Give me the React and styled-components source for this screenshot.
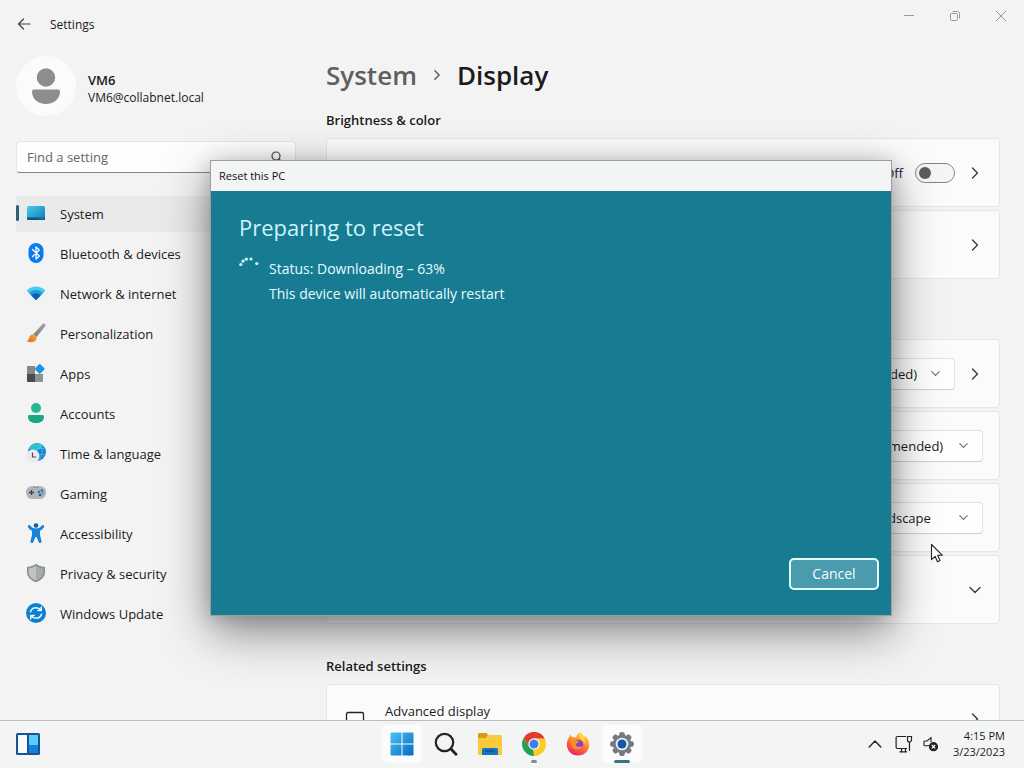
import React from 'react';
import styled, { createGlobalStyle } from 'styled-components';

const Global = createGlobalStyle`
  *, *::before, *::after { box-sizing: border-box; }
  html, body { margin: 0; height: 100%; overflow: hidden; }
  body {
    background: #f3f3f3;
    color: #1b1b1b;
    font-family: 'Open Sans', 'Noto Sans', sans-serif;
    font-size: 13px;
    line-height: 20px;
  }
  #root { height: 100%; }
  button, input, select { font: inherit; color: inherit; margin: 0; }
  h1, h2, p { margin: 0; }
  svg { display: block; flex: none; }
`;

const Desktop = styled.div`
  position: relative;
  display: flex;
  flex-direction: column;
  height: 100vh;
  overflow: hidden;
`;

const SettingsWindow = styled.div`
  flex: 1;
  min-height: 0;
  display: flex;
  flex-direction: column;
  overflow: hidden;
`;

const TitleBar = styled.header`
  flex: none;
  display: flex;
  align-items: flex-start;
  height: 48px;
`;

const AppTitle = styled.span`
  flex: 1;
  font-size: 12px;
  line-height: 50px;
  padding-left: 2px;
`;

const PlainButton = styled.button`
  display: flex;
  align-items: center;
  justify-content: center;
  padding: 0;
  border: 0;
  background: transparent;
  width: ${(p) => p.$w || 20}px;
  height: ${(p) => p.$h || 20}px;
`;

const Body = styled.div`
  flex: 1;
  min-height: 0;
  display: flex;
`;

const Sidebar = styled.aside`
  flex: none;
  width: 326px;
  padding: 8px 30px 0 16px;
`;

const Profile = styled.div`
  display: flex;
  align-items: center;
  gap: 12px;
  height: 60px;
  margin-bottom: 25px;
`;

const Avatar = styled.div`
  display: flex;
  align-items: center;
  justify-content: center;
  width: 60px;
  height: 60px;
  border-radius: 50%;
  background: #fbfbfb;
`;

const UserName = styled.p`
  font-weight: 600;
  line-height: 18px;
  padding-top: 6px;
`;

const UserMail = styled.p`
  font-size: 12px;
  line-height: 18px;
`;

const SearchBox = styled.label`
  display: flex;
  align-items: center;
  height: 32px;
  margin-bottom: 23px;
  padding: 0 12px 0 10px;
  border: 1px solid #e5e5e5;
  border-bottom-color: #868686;
  border-radius: 4px;
  background: #fdfdfd;
`;

const SearchInput = styled.input`
  flex: 1;
  min-width: 0;
  padding: 0;
  border: 0;
  outline: 0;
  background: transparent;
  &::placeholder { color: #666; opacity: 1; }
`;

const Nav = styled.nav`
  display: flex;
  flex-direction: column;
  gap: 4px;
`;

const NavLink = styled.a`
  position: relative;
  display: flex;
  align-items: center;
  gap: 14px;
  height: 36px;
  padding-left: 10px;
  border-radius: 4px;
  color: #1b1b1b;
  text-decoration: none;
  background: ${(p) => (p.$active ? '#eaeaea' : 'transparent')};
  & > svg { margin-bottom: 2px; }
  &::before {
    content: '';
    position: absolute;
    left: 0;
    top: 9px;
    width: 3px;
    height: 16px;
    border-radius: 2px;
    background: ${(p) => (p.$active ? '#2b6073' : 'transparent')};
  }
`;

const Main = styled.main`
  flex: 1;
  min-width: 0;
  padding: 7px 24px 0 0;
`;

const Crumbs = styled.h1`
  display: flex;
  align-items: center;
  gap: 15px;
  font-size: 26px;
  font-weight: 600;
  line-height: 40px;
`;

const CrumbLink = styled.a`
  color: #5f5f5f;
  text-decoration: none;
`;

const SectionTitle = styled.h2`
  font-size: 13px;
  font-weight: 600;
  line-height: 20px;
  margin-bottom: 8px;
`;

const Section = styled.section`
  padding-top: ${(p) => (p.$first ? 15 : 32)}px;
`;

const Cards = styled.div`
  display: flex;
  flex-direction: column;
  gap: 3px;
`;

const Card = styled.div`
  display: flex;
  align-items: center;
  justify-content: flex-end;
  gap: 12px;
  height: 69px;
  padding: 0 16px;
  border: 1px solid #e6e6e6;
  border-radius: 4px;
  background: #fbfbfb;
`;

const CardLead = styled.div`
  flex: 1;
  display: flex;
  align-items: center;
  gap: 20px;
  padding-left: 2px;
`;

const CardHeading = styled.p`
  min-height: 36px;
`;

const SwitchLabel = styled.label`
  display: flex;
  align-items: center;
  gap: 12px;
`;

const Switch = styled.input`
  appearance: none;
  display: flex;
  align-items: center;
  width: 40px;
  height: 20px;
  padding-left: 3px;
  border: 1px solid #868686;
  border-radius: 10px;
  background: #f5f5f5;
  &::before {
    content: '';
    width: 12px;
    height: 12px;
    border-radius: 50%;
    background: #5c5c5c;
  }
`;

const SelectWrap = styled.div`
  display: grid;
  align-items: center;
  justify-items: end;
  & > * { grid-area: 1 / 1; }
  & > svg { margin-right: 15px; pointer-events: none; }
`;

const Select = styled.select`
  appearance: none;
  width: ${(p) => p.$w}px;
  height: 32px;
  padding: 0 36px 0 12px;
  border: 1px solid #e3e3e3;
  border-bottom-color: #cfcfcf;
  border-radius: 4px;
  background: #fefefe;
`;

const Dialog = styled.section`
  position: absolute;
  left: 210px;
  top: 160px;
  width: 682px;
  height: 456px;
  display: flex;
  flex-direction: column;
  border: 1px solid #9c9fa0;
  background: #177c92;
  box-shadow: 0 16px 44px rgba(0, 0, 0, 0.45), 0 2px 18px rgba(0, 0, 0, 0.16);
`;

const DialogBar = styled.header`
  flex: none;
  height: 30px;
  padding-left: 8px;
  background: #f3f4f4;
  color: #111;
  font-size: 11px;
  line-height: 29px;
`;

const DialogBody = styled.div`
  flex: 1;
  display: flex;
  flex-direction: column;
  padding: 19px 12px 25px 28px;
  color: #e6fbff;
`;

const DialogTitle = styled.h2`
  font-size: 22px;
  font-weight: 400;
  line-height: 34px;
  color: #cff3fb;
`;

const Status = styled.div`
  flex: 1;
  display: flex;
  align-items: flex-start;
  gap: 10px;
  padding-top: 12px;
  font-size: 14px;
  line-height: 25px;
`;

const Actions = styled.div`
  display: flex;
  justify-content: flex-end;
`;

const CancelButton = styled.button`
  width: 90px;
  height: 32px;
  padding: 0;
  border: 2px solid #e2ffff;
  border-radius: 5px;
  background: #4a9bad;
  color: #f2ffff;
  font-size: 14px;
`;

const Taskbar = styled.footer`
  flex: none;
  display: grid;
  grid-template-columns: 1fr auto 1fr;
  align-items: center;
  height: 48px;
  padding: 0 16px 2px;
  border-top: 1px solid #bdbdbd;
  background: #f3f4f4;
`;

const Apps = styled.div`
  display: flex;
  gap: 4px;
`;

const AppButton = styled.button`
  position: relative;
  display: flex;
  align-items: center;
  justify-content: center;
  width: 40px;
  height: 38px;
  padding: 0;
  border: 0;
  border-radius: 4px;
  background: ${(p) => (p.$lit ? '#fcfcfc' : 'transparent')};
  &::after {
    content: '';
    position: absolute;
    bottom: 0;
    left: calc(50% - ${(p) => (p.$mark || 0) / 2}px);
    width: ${(p) => p.$mark || 0}px;
    height: 3px;
    border-radius: 2px;
    background: ${(p) => (p.$lit ? '#2b7a86' : '#8a8a8a')};
  }
`;

const Tray = styled.div`
  display: flex;
  align-items: center;
  justify-content: flex-end;
  gap: 10px;
`;

const Clock = styled.time`
  padding: 0 3px 0 4px;
  font-size: 11px;
  line-height: 16px;
  text-align: right;
`;

const Pointer = styled.svg`
  position: absolute;
  left: 930px;
  top: 543px;
`;

const Chevron = ({ d = 'right', size = 12, color = '#3a3a3a', w = 1.4 }) => {
  const paths = { right: 'M3.5 1 8.5 6 3.5 11', down: 'M1 3.5 6 8.5 11 3.5', up: 'M1 8.5 6 3.5 11 8.5' };
  return (
    <svg width={size} height={size} viewBox="0 0 12 12" fill="none" stroke={color} strokeWidth={w} strokeLinecap="round" strokeLinejoin="round">
      <path d={paths[d]} />
    </svg>
  );
};

const Icon = ({ children }) => (
  <svg width="20" height="20" viewBox="0 0 20 20" fill="none">{children}</svg>
);

const SystemIcon = () => (
  <Icon>
    <defs><linearGradient id="sys" x1="0" y1="0" x2="1" y2="1"><stop stopColor="#43d0ee" /><stop offset="1" stopColor="#1279b4" /></linearGradient></defs>
    <rect x="1" y="3" width="18" height="14" rx="1.5" fill="url(#sys)" />
    <path d="M1 14.500h18v1a1.500 1.500 0 0 1-1.500 1.500h-15A1.500 1.500 0 0 1 1 15.500z" fill="#0d5680" />
    <path d="M13.500 15.700h1M16 15.700h1" stroke="#5fd0f0" strokeWidth=".8" />
  </Icon>
);

const BluetoothIcon = () => (
  <Icon>
    <rect x="2.500" y="0" width="15" height="20" rx="7.500" fill="#0a7af0" />
    <path d="M6.500 6.500 13.300 13 10 16V4l3.300 3-6.800 6.500" stroke="#fff" strokeWidth="1.300" strokeLinejoin="round" strokeLinecap="round" />
  </Icon>
);

const NetworkIcon = () => (
  <Icon>
    <path d="M.5 7.500C6 2 14 2 19.500 7.500L10.700 16.600a1 1 0 0 1-1.400 0z" fill="#4ccbf1" />
    <path d="M2.800 9.800c4.200-3.900 10.200-3.900 14.400 0l-6.500 6.800a1 1 0 0 1-1.400 0z" fill="#1f9be0" />
    <path d="M5.300 12.400c2.700-2.500 6.700-2.500 9.400 0l-4 4.200a1 1 0 0 1-1.400 0z" fill="#0b63ad" />
  </Icon>
);

const BrushIcon = () => (
  <Icon>
    <defs>
      <linearGradient id="hand" x1="0" y1="1" x2="1" y2="0"><stop stopColor="#7b7b80" /><stop offset="1" stopColor="#a4a4a9" /></linearGradient>
      <linearGradient id="hair" x1="1" y1="0" x2="0" y2="1"><stop stopColor="#f9b24d" /><stop offset="1" stopColor="#e0641a" /></linearGradient>
    </defs>
    <path d="M18.800.8c1 .7.700 1.900 0 3L10.600 14 7.300 11.300 16.200 1.500C17 .6 18 .3 18.800.8z" fill="url(#hand)" />
    <path d="M7.300 11.300 10.600 14c.5 2.800-1.700 5-4.600 5.200-2.100.2-4.200-.1-5.600-1.100 1.900-.4 2.200-1.800 2.600-3.400.6-2.400 2.500-3.700 4.300-3.400z" fill="url(#hair)" />
  </Icon>
);

const AppsIcon = () => (
  <Icon>
    <path d="M1 3h8v8H1z" fill="#85888b" />
    <path d="M1 11h8v8H2a1 1 0 0 1-1-1z" fill="#494b4e" />
    <path d="M9 11h8v7a1 1 0 0 1-1 1H9z" fill="#8e9194" />
    <path d="m13.100 1.300-4 4a1 1 0 0 0 0 1.300l4 4a1 1 0 0 0 1.300 0l4-4a1 1 0 0 0 0-1.300l-4-4a1 1 0 0 0-1.300 0z" fill="#1f93e0" />
  </Icon>
);

const AccountsIcon = () => (
  <Icon>
    <circle cx="10" cy="5" r="5" fill="#25b992" />
    <path d="M3.700 12h12.600c1 0 1.700.8 1.700 1.700 0 4-3.500 6.300-8 6.300s-8-2.300-8-6.300c0-1 .7-1.700 1.700-1.700z" fill="#1fa582" />
  </Icon>
);

const TimeIcon = () => (
  <Icon>
    <circle cx="11" cy="9" r="9" fill="#1686d3" />
    <path d="M3 5C6-1 14-1 17 2.500c-1 3-4 3-5 5s-4 3-9-2.500z" fill="#30bfd3" />
    <path d="M14 1c3 5 3 11-1 16.500M10 5.500h9.500M12 11.500h7.500" stroke="#67c5ef" strokeWidth=".6" />
    <circle cx="6.800" cy="13.200" r="6.600" fill="#ece9ec" />
    <path d="M6.500 9.500V14H10" stroke="#4b4660" strokeWidth="1.200" />
  </Icon>
);

const GamingIcon = () => (
  <Icon>
    <rect x="0" y="3" width="20" height="13" rx="6" fill="#adb5bd" />
    <path d="M3 9.500h5M5.500 7v5" stroke="#3a4046" strokeWidth="1.300" />
    <path d="M8.500 4.500h.8M11.500 4.500h.8" stroke="#3a4046" strokeWidth="1" />
    <circle cx="13" cy="9" r="1.300" fill="#3070a8" /><circle cx="16" cy="7.500" r="1.300" fill="#3070a8" />
    <circle cx="14" cy="12" r="1.300" fill="#24578a" /><circle cx="16.600" cy="10.400" r="1.100" fill="#548bb6" />
  </Icon>
);

const AccessIcon = () => (
  <Icon>
    <circle cx="10" cy="2.500" r="2.300" fill="#155c9a" />
    <path d="M2.500 2.300c.7-.5 1.500-.2 2 .4C5.600 4.500 7.500 5.500 10 5.500s4.400-1 5.500-2.800c.5-.6 1.300-.9 2-.4.8.5.8 1.400.3 2.100-1 1.600-2.300 2.700-3.800 3.400V12l1.500 6c.2.900-.2 1.700-1 1.900s-1.600-.2-1.800-1L10.500 14h-1l-2.200 4.900c-.2.8-1 1.200-1.800 1s-1.200-1-1-1.900L6 12V7.800C4.500 7.100 3.200 6 2.200 4.400c-.5-.7-.5-1.600.3-2.100z" fill="#1684d8" />
  </Icon>
);

const ShieldIcon = () => (
  <Icon>
    <path d="M10 .8c2.300 1.900 5 2.700 8.500 2.900.3 0 .5.300.5.600v4.900c0 4.600-3.400 7.800-9 10C4.400 17 1 13.800 1 9.200V4.300c0-.3.200-.6.500-.6C5 3.500 7.700 2.700 10 .8z" fill="#8b8f91" />
    <path d="M10 2.800c2 1.500 4.400 2.200 7.400 2.400v4c0 3.600-2.600 6.200-7.400 8.200z" fill="#a7abac" />
    <path d="M10 2.800C8 4.300 5.600 5 2.600 5.200v4c0 3.600 2.600 6.200 7.400 8.200z" fill="#c0c3c3" />
  </Icon>
);

const UpdateIcon = () => (
  <Icon>
    <circle cx="10" cy="10" r="10" fill="#0d7fd3" />
    <path d="M4.500 8.700C5.300 6 7.500 4.700 10 4.700c2.100 0 3.800 1 5 2.600M15.300 4v3.600h-3.600M15.500 11.300c-.8 2.700-3 4-5.500 4-2.100 0-3.800-1-5-2.600M4.700 16v-3.600h3.600" stroke="#e9f8ff" strokeWidth="1.500" strokeLinecap="round" strokeLinejoin="round" />
  </Icon>
);

const NAV = [
  ['System', SystemIcon],
  ['Bluetooth & devices', BluetoothIcon],
  ['Network & internet', NetworkIcon],
  ['Personalization', BrushIcon],
  ['Apps', AppsIcon],
  ['Accounts', AccountsIcon],
  ['Time & language', TimeIcon],
  ['Gaming', GamingIcon],
  ['Accessibility', AccessIcon],
  ['Privacy & security', ShieldIcon],
  ['Windows Update', UpdateIcon],
];

const Dropdown = ({ label, value, width }) => (
  <SelectWrap>
    <Select aria-label={label} $w={width} defaultValue={value}>
      <option>{value}</option>
    </Select>
    <Chevron d="down" size={9} color="#6a6a6a" />
  </SelectWrap>
);

const WidgetsIcon = () => (
  <svg width="24" height="22" viewBox="0 0 24 22">
    <rect width="24" height="22" rx="1.500" fill="#14568f" />
    <path d="M2 2h9v18H2z" fill="#f8fcff" />
    <path d="M13 2h9v10h-9z" fill="#5ccbfb" />
    <path d="M13 12h9v8h-9z" fill="#1581dc" />
  </svg>
);

const StartIcon = () => (
  <svg width="24" height="24" viewBox="0 0 24 24">
    <defs><linearGradient id="win" x1="0" y1="0" x2="1" y2="1"><stop stopColor="#4cc3f5" /><stop offset="1" stopColor="#0669c4" /></linearGradient></defs>
    <path d="M1.500.5h10v11h-11v-10a1 1 0 0 1 1-1zM12.500.5h10a1 1 0 0 1 1 1v10h-11zM.5 12.500h11v11h-10a1 1 0 0 1-1-1zM12.500 12.500h11v10a1 1 0 0 1-1 1h-10z" fill="url(#win)" />
  </svg>
);

const FindIcon = () => (
  <svg width="24" height="24" viewBox="0 0 24 24" fill="none" stroke="#222427" strokeLinecap="round">
    <circle cx="10.500" cy="10.500" r="8.700" strokeWidth="2.200" />
    <path d="m17 17 5 5.200" strokeWidth="2.900" />
  </svg>
);

const FolderIcon = () => (
  <svg width="26" height="24" viewBox="0 0 26 24">
    <path d="M1 2.500A1.500 1.500 0 0 1 2.500 1h7l2.500 3.500-2 3H1z" fill="#d79a14" />
    <path d="M11 3h12.500A1.500 1.500 0 0 1 25 4.500v17a1.500 1.500 0 0 1-1.500 1.500h-21A1.500 1.500 0 0 1 1 21.500V6h7.500z" fill="#fac93c" />
    <path d="M5 23v-5.500A1.500 1.500 0 0 1 6.500 16h13a1.500 1.500 0 0 1 1.500 1.500V23z" fill="#1474c4" />
    <path d="M8 19h10" stroke="#0c519a" strokeWidth="1.500" />
  </svg>
);

const ChromeIcon = () => (
  <svg width="24" height="24" viewBox="0 0 24 24">
    <path d="M12 12 22.390 6A12 12 0 0 1 12 24z" fill="#fccb25" />
    <path d="M12 6.500h10.700L17 15l-5-3z" fill="#fccb25" />
    <path d="M12 6.500H22.700A12 12 0 0 0 1.610 6l5.630 8.700z" fill="#e23b30" />
    <path d="M1.610 6 7.200 14.700l4.800 2.800L12 24A12 12 0 0 1 1.610 6z" fill="#25a052" />
    <path d="M16.800 14.800 12 24l-1-6.500z" fill="#fccb25" />
    <circle cx="12" cy="12" r="5.700" fill="#fff" />
    <circle cx="12" cy="12" r="4.500" fill="#3a7ff0" />
  </svg>
);

const FirefoxIcon = () => (
  <svg width="24" height="24" viewBox="0 0 24 24">
    <defs>
      <linearGradient id="fox" x1=".8" y1="0" x2=".3" y2="1"><stop stopColor="#ffe04a" /><stop offset=".45" stopColor="#ff8a2a" /><stop offset="1" stopColor="#ec1d63" /></linearGradient>
    </defs>
    <path d="M14.500.5c2 1.300 3.200 2.800 3.800 4.800.5-.5.700-1 .6-1.800 2.800 2.500 4.300 5.300 4.300 9.200C23.200 19 18.300 23.500 12 23.500S.8 18.700.8 12.500c0-3.300 1.100-5.600 2.500-7.500.1-1 .4-1.700 1-2.500.3 1.200.9 2 1.900 2.500 1.500-.3 2.500 0 3.600.6C10.800 2.500 12.600.8 14.500.5z" fill="url(#fox)" />
    <circle cx="12.200" cy="12.800" r="5" fill="#8440cf" />
    <path d="M4.500 7.200c2.500-1 4.600-.4 6 1 1 .9 2.500.7 2.500 1.600 0 1.100-2.500 1-3 2.500-.4 1.400 1 3 3.400 2.500 1.200-.3 2.200-.8 3-.3-1 2.400-3 3.500-5.500 3.300C6.500 17.400 4 13 4.500 7.200z" fill="#ff8b27" />
    <path d="M14.500.5c2.900 2.800 4.800 6.300 4.400 11.500-.8-2.700-2-3.900-4.400-5-1.800-2.500-1.300-4.600 0-6.500z" fill="#ffd83c" />
  </svg>
);

const GearIcon = () => (
  <svg width="24" height="24" viewBox="0 0 24 24">
    <g fill="#76797d">
      {[0, 45, 90, 135, 180, 225, 270, 315].map((a) => (
        <path key={a} d="M8.800 4 9.700.6Q12-.4 14.300.6L15.200 4z" transform={`rotate(${a} 12 12)`} />
      ))}
      <circle cx="12" cy="12" r="9" />
    </g>
    <circle cx="12" cy="12" r="6.300" fill="#eef3f7" />
    <circle cx="12" cy="12" r="4.500" fill="#1159ab" />
  </svg>
);

export default function App() {
  return (
    <>
      <Global />
      <Desktop>
        <SettingsWindow>
          <TitleBar>
            <PlainButton $w={48} $h={48} aria-label="Back">
              <svg width="14" height="14" viewBox="0 0 14 14" fill="none" stroke="#444" strokeWidth="1.200" strokeLinecap="round" strokeLinejoin="round"><path d="M13 7H1.500M6.500 2l-5 5 5 5" /></svg>
            </PlainButton>
            <AppTitle>Settings</AppTitle>
            <PlainButton $w={46} $h={32} aria-label="Minimize">
              <svg width="10" height="10" viewBox="0 0 10 10" stroke="#999"><path d="M0 4.500h10" /></svg>
            </PlainButton>
            <PlainButton $w={46} $h={32} aria-label="Restore">
              <svg width="10" height="10" viewBox="0 0 10 10" fill="none" stroke="#999"><rect x=".5" y="2.500" width="7" height="7" rx="1" /><path d="M2.500.5h5a2 2 0 0 1 2 2v5" /></svg>
            </PlainButton>
            <PlainButton $w={46} $h={32} aria-label="Close">
              <svg width="12" height="12" viewBox="0 0 12 12" stroke="#999"><path d="m1 1 10 10M11 1 1 11" /></svg>
            </PlainButton>
          </TitleBar>
          <Body>
            <Sidebar>
              <Profile>
                <Avatar>
                  <svg width="28" height="36" viewBox="0 0 28 36" fill="#8d8d8d"><circle cx="14" cy="9.500" r="9.200" /><path d="M2 21.500h24a2 2 0 0 1 2 2C28 31 22 36 14 36S0 31 0 23.500a2 2 0 0 1 2-2z" /></svg>
                </Avatar>
                <div>
                  <UserName>VM6</UserName>
                  <UserMail>VM6@collabnet.local</UserMail>
                </div>
              </Profile>
              <SearchBox>
                <SearchInput type="text" placeholder="Find a setting" aria-label="Find a setting" />
                <svg width="12" height="12" viewBox="0 0 12 12" fill="none" stroke="#4a4a4a" strokeWidth="1.200" strokeLinecap="round"><circle cx="5" cy="5" r="4" /><path d="m8 8 3.300 3.300" /></svg>
              </SearchBox>
              <Nav>
                {NAV.map(([label, Glyph], i) => (
                  <NavLink key={label} href="#" $active={i === 0}>
                    <Glyph />
                    {label}
                  </NavLink>
                ))}
              </Nav>
            </Sidebar>
            <Main>
              <Crumbs>
                <CrumbLink href="#">System</CrumbLink>
                <Chevron size={10} color="#5f5f5f" w={1.8} />
                <span>Display</span>
              </Crumbs>
              <Section $first>
                <SectionTitle>Brightness &amp; color</SectionTitle>
                <Cards>
                  <Card>
                    <SwitchLabel>Off<Switch type="checkbox" role="switch" /></SwitchLabel>
                    <PlainButton $w={16} aria-label="Night light options"><Chevron /></PlainButton>
                  </Card>
                  <Card>
                    <PlainButton $w={16} aria-label="HDR options"><Chevron /></PlainButton>
                  </Card>
                </Cards>
              </Section>
              <Section>
                <SectionTitle>Scale &amp; layout</SectionTitle>
                <Cards>
                  <Card>
                    <Dropdown label="Scale" value="100% (Recommended)" width={187} />
                    <PlainButton $w={16} aria-label="Custom scaling"><Chevron /></PlainButton>
                  </Card>
                  <Card><Dropdown label="Display resolution" value="1024 × 768 (Recommended)" width={222} /></Card>
                  <Card><Dropdown label="Display orientation" value="Landscape" width={130} /></Card>
                  <Card>
                    <PlainButton $w={16} aria-label="Multiple displays"><Chevron d="down" /></PlainButton>
                  </Card>
                </Cards>
              </Section>
              <Section>
                <SectionTitle>Related settings</SectionTitle>
                <Cards>
                  <Card>
                    <CardLead>
                      <svg width="20" height="16" viewBox="0 0 20 16" fill="none" stroke="#222" strokeWidth="1.300"><rect x="1.500" y="1.500" width="17" height="11.500" rx="1.500" /><path d="M6 15.300h8" /></svg>
                      <CardHeading>Advanced display</CardHeading>
                    </CardLead>
                    <PlainButton $w={16} aria-label="Advanced display"><Chevron /></PlainButton>
                  </Card>
                </Cards>
              </Section>
            </Main>
          </Body>
        </SettingsWindow>

        <Taskbar>
          <PlainButton $w={24} $h={24} aria-label="Widgets"><WidgetsIcon /></PlainButton>
          <Apps>
            <AppButton $lit aria-label="Start"><StartIcon /></AppButton>
            <AppButton aria-label="Search"><FindIcon /></AppButton>
            <AppButton aria-label="File Explorer"><FolderIcon /></AppButton>
            <AppButton $mark={6} aria-label="Chrome"><ChromeIcon /></AppButton>
            <AppButton aria-label="Firefox"><FirefoxIcon /></AppButton>
            <AppButton $lit $mark={16} aria-label="Settings"><GearIcon /></AppButton>
          </Apps>
          <Tray>
            <PlainButton aria-label="Show hidden icons"><Chevron d="up" size={14} color="#222" w={1.2} /></PlainButton>
            <svg width="18" height="18" viewBox="0 0 18 18" fill="none" stroke="#222" strokeWidth="1.200">
              <path d="M11 1.500H2.500a1.400 1.400 0 0 0-1.400 1.400v9.200a1.400 1.400 0 0 0 1.400 1.400H12M4.500 16.900H12M6.500 13.500v3.400M10.500 13.500v3.400M14.500 7v9" />
              <path d="M12.500 1.500h4V5a2 2 0 0 1-4 0z" />
            </svg>
            <svg width="16" height="16" viewBox="0 0 16 16">
              <path d="M6.500 9.500 4 9.800H1.800A.8.800 0 0 1 1 9V5.800A.8.800 0 0 1 1.800 5H4l4-3.300V6" fill="none" stroke="#222" strokeWidth="1.100" />
              <circle cx="10.500" cy="10.700" r="4.600" fill="#222" />
              <path d="m8.800 9 3.400 3.400M12.200 9l-3.400 3.400" stroke="#fff" strokeWidth="1.200" />
            </svg>
            <Clock>4:15 PM<br />3/23/2023</Clock>
          </Tray>
        </Taskbar>

        <Dialog role="dialog" aria-label="Reset this PC">
          <DialogBar>Reset this PC</DialogBar>
          <DialogBody>
            <DialogTitle>Preparing to reset</DialogTitle>
            <Status>
              <svg width="20" height="20" viewBox="0 0 20 20" fill="#d2f5ff">
                <circle cx="1.800" cy="8.500" r="1.600" /><circle cx="4" cy="5.200" r="1.600" /><circle cx="7.300" cy="3.200" r="1.600" /><circle cx="12" cy="3" r="1.600" /><circle cx="17.800" cy="7.500" r="1.600" />
              </svg>
              <div>
                <p>Status: Downloading – 63%</p>
                <p>This device will automatically restart</p>
              </div>
            </Status>
            <Actions><CancelButton>Cancel</CancelButton></Actions>
          </DialogBody>
        </Dialog>

        <Pointer width="14" height="21" viewBox="0 0 14 21">
          <path d="M1.500 1.500v15.200l3.600-3.400 2.300 5.400 2.600-1.100-2.300-5.300h4.700z" fill="#fff" stroke="#222" strokeWidth="1.100" strokeLinejoin="round" />
        </Pointer>
      </Desktop>
    </>
  );
}
